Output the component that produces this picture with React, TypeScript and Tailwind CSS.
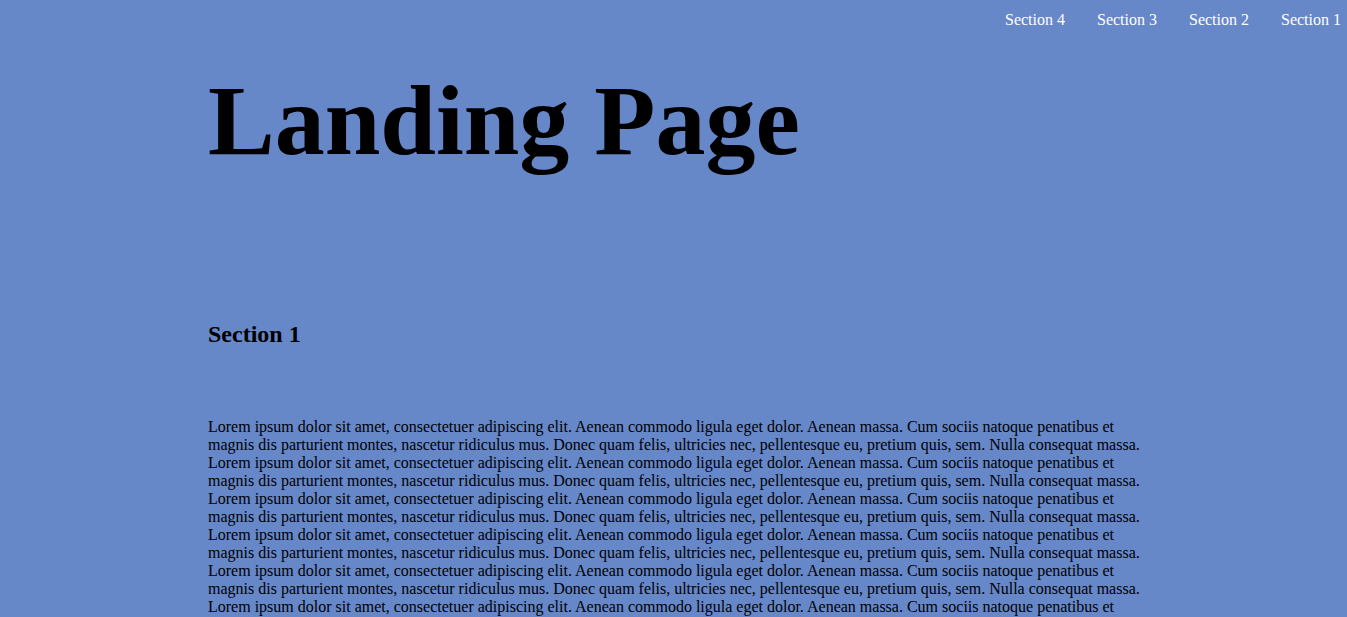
import React from "react";

const lorem =
  "Lorem ipsum dolor sit amet, consectetuer adipiscing elit. Aenean commodo ligula eget dolor. Aenean massa. Cum sociis natoque penatibus et magnis dis parturient montes, nascetur ridiculus mus. Donec quam felis, ultricies nec, pellentesque eu, pretium quis, sem. Nulla consequat massa.";

const navItems = ["Section 4", "Section 3", "Section 2", "Section 1"];

const App = () => {
  return (
    <div className="min-h-screen w-full bg-[#6687c8] font-['Liberation_Serif','Times_New_Roman',serif] text-black">
      <header className="flex justify-end gap-8 pr-[6px] pt-[11px]">
        {navItems.map((item) => (
          <a key={item} href="#" className="text-base leading-[18px] text-white">
            {item}
          </a>
        ))}
      </header>
      <main className="ml-[208px] w-[940px]">
        <h1 className="mt-[34px] text-[100px] font-bold leading-[115px]">Landing Page</h1>
        <section>
          <h2 className="mt-[143px] text-2xl font-bold leading-[27px]">Section 1</h2>
          <div className="mt-[70px] text-base leading-[18px]">
            {Array.from({ length: 8 }).map((_, i) => (
              <p key={i}>{lorem}</p>
            ))}
          </div>
        </section>
      </main>
    </div>
  );
};

export default App;
